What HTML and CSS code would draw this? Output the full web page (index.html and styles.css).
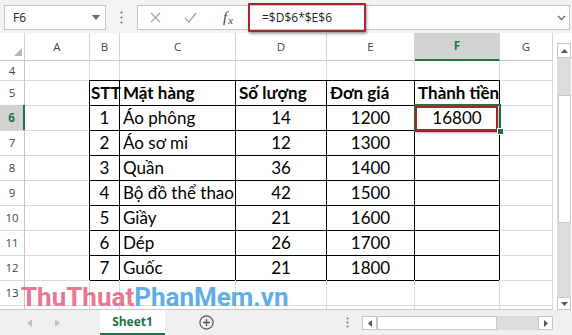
FILE: index.html
```html
<!DOCTYPE html>
<html lang="vi">
<head>
    <meta charset="UTF-8">
    <title>Thành tiền - Excel</title>
    <link rel="stylesheet" href="styles.css">
</head>
<body>
    <div class="app">
        <!-- thanh công thức -->
        <div class="toolbar">
            <div class="namebox">
                <span>F6</span>
                <svg width="8" height="5" viewBox="0 0 8 5"><path d="M0 0h8L4 5z" fill="#666"/></svg>
            </div>
            <div class="dots">
                <svg width="3" height="13" viewBox="0 0 3 13"><circle cx="1.5" cy="1.5" r="1.1" fill="#777"/><circle cx="1.5" cy="6.5" r="1.1" fill="#777"/><circle cx="1.5" cy="11.5" r="1.1" fill="#777"/></svg>
            </div>
            <div class="fbar">
                <div class="fbtns">
                    <span class="fbtn x-btn"><svg width="11" height="11" viewBox="0 0 11 11"><path d="M1 1l9 9M10 1l-9 9" stroke="#a6a6a6" stroke-width="1.2" fill="none"/></svg></span>
                    <span class="fbtn ok-btn"><svg width="13" height="11" viewBox="0 0 13 11"><path d="M1 6l4 4 7-9" stroke="#a6a6a6" stroke-width="1.4" fill="none"/></svg></span>
                    <span class="fbtn fx-btn"><i>f</i><i class="sub">x</i></span>
                </div>
                <div class="finput">
                    <span>=$D$6*$E$6</span>
                    <svg width="9" height="6" viewBox="0 0 9 6"><path d="M1 1l3.5 3.5L8 1" stroke="#666" stroke-width="1.3" fill="none"/></svg>
                </div>
                <div class="mark"></div>
            </div>
        </div>

        <div class="main">
            <div class="sheet">
                <div class="row hdr">
                    <div class="corner"><svg width="8" height="8" viewBox="0 0 8 8"><path d="M8 0v8H0z" fill="#b4b4b4"/></svg></div>
                    <div>A</div><div>B</div><div>C</div><div>D</div><div>E</div><div class="on">F</div><div>G</div>
                </div>
                <div class="row r4">
                    <div class="rh">4</div><div></div><div class="kb"></div><div class="kb"></div><div class="kb"></div><div class="kb"></div><div class="kb"></div><div></div>
                </div>
                <div class="row">
                    <div class="rh">5</div><div class="kr"></div>
                    <div class="k cell bold tight">STT</div><div class="k cell bold">Mặt hàng</div><div class="k cell bold">Số lượng</div><div class="k cell bold">Đơn giá</div><div class="k cell bold">Thành tiền</div><div></div>
                </div>
                <div class="row">
                    <div class="rh on">6</div><div class="kr"></div>
                    <div class="k cell mid">1</div><div class="k cell">Áo phông</div><div class="k cell mid">14</div><div class="k cell mid">1200</div>
                    <div class="k cell mid f6">16800<span class="sel"></span><span class="redbox"></span><span class="handle"></span></div><div></div>
                </div>
                <div class="row">
                    <div class="rh">7</div><div class="kr"></div>
                    <div class="k cell mid">2</div><div class="k cell">Áo sơ mi</div><div class="k cell mid">12</div><div class="k cell mid">1300</div><div class="k"></div><div></div>
                </div>
                <div class="row">
                    <div class="rh">8</div><div class="kr"></div>
                    <div class="k cell mid">3</div><div class="k cell">Quần</div><div class="k cell mid">36</div><div class="k cell mid">1400</div><div class="k"></div><div></div>
                </div>
                <div class="row">
                    <div class="rh">9</div><div class="kr"></div>
                    <div class="k cell mid">4</div><div class="k cell">Bộ đồ thể thao</div><div class="k cell mid">42</div><div class="k cell mid">1500</div><div class="k"></div><div></div>
                </div>
                <div class="row">
                    <div class="rh">10</div><div class="kr"></div>
                    <div class="k cell mid">5</div><div class="k cell">Giầy</div><div class="k cell mid">21</div><div class="k cell mid">1600</div><div class="k"></div><div></div>
                </div>
                <div class="row">
                    <div class="rh">11</div><div class="kr"></div>
                    <div class="k cell mid">6</div><div class="k cell">Dép</div><div class="k cell mid">26</div><div class="k cell mid">1700</div><div class="k"></div><div></div>
                </div>
                <div class="row">
                    <div class="rh">12</div><div class="kr"></div>
                    <div class="k cell mid">7</div><div class="k cell">Guốc</div><div class="k cell mid">21</div><div class="k cell mid">1800</div><div class="k"></div><div></div>
                </div>
                <div class="row">
                    <div class="rh">13</div><div></div><div></div><div></div><div></div><div></div><div></div><div></div>
                </div>
                <div class="row">
                    <div class="rh">14</div><div></div><div></div><div></div><div></div><div></div><div></div><div></div>
                </div>
            </div>

            <div class="vscroll">
                <div class="sbtn"><svg width="7" height="4" viewBox="0 0 7 4"><path d="M0 4h7L3.5 0z" fill="#555"/></svg></div>
                <div class="vtrack"><div class="vthumb"></div></div>
                <div class="sbtn down"><svg width="7" height="4" viewBox="0 0 7 4"><path d="M0 0h7L3.5 4z" fill="#555"/></svg></div>
            </div>
        </div>

        <!-- thanh sheet -->
        <div class="tabbar">
            <div class="nav">
                <svg class="prev" width="5" height="8" viewBox="0 0 5 8"><path d="M5 0v8L0 4z" fill="#c2c2c2"/></svg>
                <svg class="next" width="5" height="8" viewBox="0 0 5 8"><path d="M0 0v8l5-4z" fill="#c2c2c2"/></svg>
            </div>
            <div class="tab">Sheet1</div>
            <div class="add">
                <svg width="15" height="15" viewBox="0 0 15 15"><circle cx="7.5" cy="7.5" r="6.6" stroke="#555" stroke-width="1.2" fill="none"/><path d="M7.5 4v7M4 7.5h7" stroke="#555" stroke-width="1.3"/></svg>
            </div>
            <div class="spacer"></div>
            <div class="tdots">
                <svg width="3" height="11" viewBox="0 0 3 11"><circle cx="1.5" cy="1.5" r="1" fill="#777"/><circle cx="1.5" cy="5.5" r="1" fill="#777"/><circle cx="1.5" cy="9.5" r="1" fill="#777"/></svg>
            </div>
            <div class="hscroll">
                <div class="sbtn"><svg width="4" height="7" viewBox="0 0 4 7"><path d="M4 0v7L0 3.5z" fill="#555"/></svg></div>
                <div class="hthumb"></div>
                <div class="htrack"></div>
                <div class="sbtn"><svg width="4" height="7" viewBox="0 0 4 7"><path d="M0 0v7l4-3.5z" fill="#555"/></svg></div>
            </div>
        </div>

        <div class="watermark"><span class="wm-a">ThuThuat</span><span class="wm-b">PhanMem.vn</span></div>
    </div>
</body>
</html>
```

FILE: styles.css
```css
body {
    margin: 0;
    background: #fff;
    font-family: "Open Sans", sans-serif;
}
.app {
    width: 572px;
    height: 335px;
    position: relative;
    overflow: hidden;
    background: #f3f3f3;
}

/* formula bar */
.toolbar {
    height: 33px;
    box-sizing: border-box;
    display: flex;
    align-items: flex-start;
    padding: 5px 0 0 4px;
}
.namebox {
    width: 102px;
    height: 25px;
    box-sizing: border-box;
    border: 1px solid #c6c6c6;
    background: #fff;
    display: flex;
    align-items: center;
    justify-content: space-between;
    padding: 0 5px 0 8px;
    font-size: 12px;
    color: #222;
}
.dots {
    width: 31px;
    height: 25px;
    display: flex;
    align-items: center;
    justify-content: center;
}
.fbar {
    position: relative;
    width: 433px;
    height: 25px;
    box-sizing: border-box;
    border: 1px solid #c6c6c6;
    background: #fff;
    display: flex;
}
.fbtns {
    width: 110px;
    display: flex;
    align-items: center;
}
.fbtn {
    display: flex;
    align-items: center;
    justify-content: center;
}
.x-btn { width: 34px; }
.ok-btn { width: 36px; }
.fx-btn {
    width: 40px;
    font-family: "Liberation Serif", serif;
    color: #444;
    font-size: 15px;
}
.fx-btn .sub {
    font-size: 11px;
    margin-top: 4px;
    margin-left: 1px;
}
.finput {
    flex: 1;
    border-left: 1px solid #e2e2e2;
    display: flex;
    align-items: center;
    justify-content: space-between;
    padding: 0 3px 0 13px;
    font-size: 12px;
    color: #222;
}
.mark {
    position: absolute;
    left: 110px;
    top: -3px;
    width: 118px;
    height: 29px;
    box-sizing: border-box;
    border: 2px solid #a5262b;
    border-radius: 1px;
    box-shadow: 1px 2px 3px rgba(0,0,0,0.35);
}

/* sheet grid */
.main {
    display: flex;
    height: 277px;
    background: #fff;
}
.sheet {
    width: 553px;
    height: 277px;
    box-sizing: border-box;
    border-bottom: 1px solid #c6c6c6;
    overflow: hidden;
}
.row {
    display: grid;
    grid-template-columns: 25px 65px 30px 116px 91px 88px 85px 53px;
    height: 25px;
}
.row > div {
    box-sizing: border-box;
    border-right: 1px solid #dadada;
    border-bottom: 1px solid #dadada;
}
.hdr { height: 28px; }
.r4 { height: 19px; }
.hdr > div {
    border-right-color: #d4d4d4;
    border-bottom-color: #c6c6c6;
    text-align: center;
    font-size: 11.5px;
    line-height: 27px;
    color: #444;
}
.hdr > .on {
    background: #d2d2d2;
    color: #217346;
    font-weight: bold;
    border-bottom: 2px solid #217346;
    line-height: 26px;
}
.hdr > .corner {
    display: flex;
    align-items: flex-end;
    justify-content: flex-end;
    padding: 0 2px 4px 0;
}
.row > .rh {
    text-align: center;
    font-size: 11.5px;
    line-height: 25px;
    color: #444;
    border-right-color: #c6c6c6;
}
.r4 > .rh { line-height: 19px; }
.row > .rh.on {
    background: #d2d2d2;
    color: #217346;
    font-weight: bold;
    border-right: 2px solid #217346;
}
.cell {
    font-family: Lato, "Open Sans", sans-serif;
    font-size: 17px;
    line-height: 24px;
    color: #000;
    padding: 1px 3px 0;
    white-space: nowrap;
}
.bold { font-weight: bold; }
.tight { padding: 1px 0 0 1px; }
.mid { text-align: center; }
.row > .k {
    border-right-color: #000;
    border-bottom-color: #000;
}
.row > .kb { border-bottom-color: #000; }
.row > .kr { border-right-color: #000; }

.f6 { position: relative; }
.sel {
    position: absolute;
    top: -1px;
    left: -1px;
    right: -2px;
    bottom: -2px;
    border: 2px solid #217346;
    z-index: 2;
}
.redbox {
    position: absolute;
    top: 1px;
    left: 0;
    right: 1px;
    bottom: -1px;
    border: 2px solid #a5262b;
    box-shadow: 1px 2px 3px rgba(0,0,0,0.3);
    z-index: 3;
}
.handle {
    position: absolute;
    right: -5px;
    bottom: -5px;
    width: 5px;
    height: 5px;
    background: #217346;
    border: 1px solid #fff;
    z-index: 4;
}

/* scrollbars */
.vscroll {
    width: 19px;
    box-sizing: border-box;
    padding: 10px 1px 0 4px;
    display: flex;
    flex-direction: column;
    background: #fff;
}
.sbtn {
    box-sizing: border-box;
    border: 1px solid #c6c6c6;
    background: #fff;
    display: flex;
    align-items: center;
    justify-content: center;
}
.vscroll .sbtn { height: 15px; }
.vscroll .down { height: 13px; }
.vtrack {
    flex: 1;
    background: #dcdcdc;
    padding: 37px 0 0 1px;
}
.vthumb {
    height: 128px;
    background: #fff;
    border: 1px solid #c6c6c6;
    box-sizing: border-box;
}

/* sheet tabs */
.tabbar {
    height: 25px;
    display: flex;
    align-items: stretch;
    background: #f0f0f0;
}
.nav {
    width: 100px;
    display: flex;
    align-items: center;
}
.nav .prev { margin-left: 27px; }
.nav .next { margin-left: 23px; }
.tab {
    width: 65px;
    box-sizing: border-box;
    background: #fff;
    border-bottom: 2px solid #217346;
    color: #217346;
    font-weight: bold;
    font-size: 12px;
    text-align: center;
    line-height: 24px;
}
.add {
    width: 82px;
    display: flex;
    align-items: center;
    justify-content: center;
}
.spacer { width: 85px; }
.tdots {
    width: 30px;
    display: flex;
    align-items: center;
    justify-content: center;
}
.hscroll {
    width: 191px;
    height: 14px;
    margin-top: 6px;
    display: flex;
}
.hscroll .sbtn { width: 15px; }
.hthumb {
    width: 120px;
    background: #fff;
    border: 1px solid #c6c6c6;
    box-sizing: border-box;
}
.htrack {
    flex: 1;
    background: #dcdcdc;
}

/* watermark */
.watermark {
    position: absolute;
    left: 21px;
    top: 284px;
    font-family: Roboto, sans-serif;
    font-weight: bold;
    font-size: 26px;
    line-height: 26px;
    opacity: 0.85;
}
.wm-a { color: #e6607f; }
.wm-b { color: #45a2e0; }
```
